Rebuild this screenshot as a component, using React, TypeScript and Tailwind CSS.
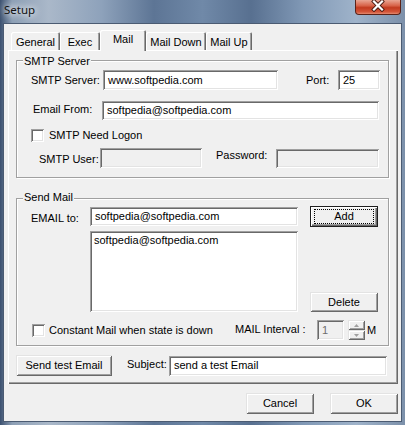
import React from "react";

const sunken =
  "shadow-[inset_1px_1px_0_#a0a0a0,inset_-1px_-1px_0_#ffffff,inset_2px_2px_0_#696969,inset_-2px_-2px_0_#e3e3e3]";
const raised =
  "shadow-[inset_1px_1px_0_#e3e3e3,inset_-1px_-1px_0_#696969,inset_2px_2px_0_#ffffff,inset_-2px_-2px_0_#a0a0a0]";

function Field({
  w,
  h = "h-[20px]",
  value = "",
  disabled = false,
}: {
  w: string;
  h?: string;
  value?: string;
  disabled?: boolean;
}) {
  return (
    <div
      className={`${w} ${h} ${disabled ? "bg-[#f0f0f0] text-[#6d6d6d]" : "bg-white text-black"} ${sunken} flex items-center pl-[5px] shrink-0 whitespace-nowrap overflow-hidden`}
    >
      {value}
    </div>
  );
}

function Check() {
  return <div className={`w-[13px] h-[13px] bg-white shrink-0 ${sunken}`} />;
}

function Btn({ w, h = "h-[21px]", label }: { w: string; h?: string; label: string }) {
  return (
    <div className={`${w} ${h} bg-[#f0f0f0] ${raised} flex items-center justify-center shrink-0`}>
      {label}
    </div>
  );
}

function Group({
  title,
  h,
  titleTop,
  children,
}: {
  title: string;
  h: string;
  titleTop: string;
  children: React.ReactNode;
}) {
  return (
    <div
      className={`relative ml-[8px] w-[373px] ${h} border border-[#a0a0a0] shadow-[inset_1px_1px_0_#ffffff,1px_1px_0_#ffffff]`}
    >
      <div className={`absolute ${titleTop} left-[6px] px-[1px] bg-[#f0f0f0] leading-[13px]`}>{title}</div>
      {children}
    </div>
  );
}

function Tab({ label, w, selected = false }: { label: string; w: string; selected?: boolean }) {
  if (selected) {
    return (
      <div
        className={`relative z-10 ${w} h-[21px] mb-[-1px] bg-[#f0f0f0] rounded-t-[2px] shadow-[inset_1px_1px_0_#ffffff,inset_-1px_0_0_#696969,inset_-2px_0_0_#a0a0a0] flex justify-center pt-[3px] leading-[13px] shrink-0`}
      >
        {label}
      </div>
    );
  }
  return (
    <div
      className={`${w} h-[18px] bg-[#f0f0f0] rounded-t-[2px] shadow-[inset_1px_1px_0_#ffffff,inset_-1px_0_0_#696969,inset_-2px_0_0_#a0a0a0] flex justify-center pt-[4px] leading-[13px] shrink-0`}
    >
      {label}
    </div>
  );
}

export default function App() {
  return (
    <div className="w-[405px] h-[425px] overflow-hidden flex flex-col bg-[linear-gradient(90deg,#3c5170_0%,#8d9fb5_3%,#aab8c9_12%,#8ea2bb_25%,#5d7595_38%,#7089a8_50%,#587090_62%,#8199b6_75%,#9fb3ca_88%,#7c90aa_100%)] font-[family-name:'Liberation_Sans',Arial,sans-serif] text-[11px] text-black">
      {/* Title bar */}
      <div className="h-[23px] flex items-start justify-between shrink-0">
        <div className="pl-[4px] pt-[2px] text-[11.5px] leading-[15px] text-[#111] font-[family-name:'Noto_Sans',sans-serif] [text-shadow:0_0_6px_#ffffff,0_0_10px_#ffffff]">
          Setup
        </div>
        <div className="mr-[4px] w-[46px] h-[15px] rounded-b-[4px] border border-t-0 border-[#5b2218] bg-[linear-gradient(180deg,#e9a593_0%,#d8644a_40%,#c23a1f_55%,#d4563a_85%,#e48a70_100%)] flex items-start justify-center">
          <svg width="14" height="12" viewBox="0 0 14 12">
            <path d="M3 1.5 L11 9.5 M11 1.5 L3 9.5" stroke="#4a1a12" strokeWidth="4" strokeLinecap="square" />
            <path d="M3 1.5 L11 9.5 M11 1.5 L3 9.5" stroke="#ffffff" strokeWidth="2.2" strokeLinecap="square" />
          </svg>
        </div>
      </div>

      {/* Client area */}
      <div className="mx-[3px] h-[399px] bg-[#f0f0f0] border border-[#4b5b72] flex flex-col shrink-0">
        {/* tabs */}
        <div className="mt-[6px] ml-[7px] h-[20px] flex items-end">
          <Tab label="General" w="w-[49px]" />
          <Tab label="Exec" w="w-[40px]" />
          <Tab label="Mail" w="w-[46px]" selected />
          <Tab label="Mail Down" w="w-[60px]" />
          <Tab label="Mail Up" w="w-[46px]" />
        </div>

        {/* tab panel */}
        <div className="ml-[4px] w-[390px] h-[334px] bg-[#f0f0f0] shadow-[inset_1px_1px_0_#ffffff,inset_-1px_-1px_0_#696969,inset_-2px_-2px_0_#a0a0a0] flex flex-col pt-[10px] shrink-0">
          <Group title="SMTP Server" h="h-[118px]" titleTop="top-[-6px]">
            <div className="mt-[9px] h-[20px] flex items-center">
              <div className="ml-[14px] w-[72px] shrink-0">SMTP Server:</div>
              <Field w="w-[175px]" value="www.softpedia.com" />
              <div className="ml-[28px] w-[32px] shrink-0">Port:</div>
              <Field w="w-[42px]" value="25" />
            </div>
            <div className="mt-[10px] h-[20px] flex items-center">
              <div className="ml-[16px] w-[69px] shrink-0 mb-[2px]">Email From:</div>
              <Field w="w-[277px]" h="h-[19px]" value="softpedia@softpedia.com" />
            </div>
            <div className="mt-[9px] h-[13px] flex items-center">
              <div className="ml-[14px]">
                <Check />
              </div>
              <div className="ml-[5px]">SMTP Need Logon</div>
            </div>
            <div className="mt-[6px] h-[20px] flex items-center">
              <div className="ml-[22px] w-[61px] shrink-0 mt-[2px]">SMTP User:</div>
              <Field w="w-[102px]" disabled />
              <div className="ml-[14px] w-[60px] shrink-0 mb-[6px]">Password:</div>
              <Field w="w-[103px]" h="h-[19px]" disabled />
            </div>
          </Group>

          <div className="mt-[20px]">
            <Group title="Send Mail" h="h-[148px]" titleTop="top-[-8px]">
              <div className="mt-[7px] flex">
                <div className="ml-[14px] w-[59px] pt-[4px] shrink-0">EMAIL to:</div>
                <div className="w-[208px] flex flex-col shrink-0">
                  <div className="mt-[1px]">
                    <Field w="w-[208px]" h="h-[19px]" value="softpedia@softpedia.com" />
                  </div>
                  <div className={`mt-[5px] w-[208px] h-[81px] bg-white ${sunken} pl-[4px] pt-[3px] leading-[13px]`}>
                    softpedia@softpedia.com
                  </div>
                </div>
                <div className="ml-[12px] w-[68px] h-[106px] flex flex-col justify-between shrink-0">
                  <div className="relative w-[68px] h-[21px] border border-[#1e1e1e] bg-[#f0f0f0] shadow-[inset_1px_1px_0_#ffffff,inset_-1px_-1px_0_#696969,inset_-2px_-2px_0_#a0a0a0] flex items-center justify-center">
                    <div className="absolute left-[3px] right-[3px] top-[2px] bottom-[2px] border border-dotted border-black" />
                    Add
                  </div>
                  <Btn w="w-[68px]" h="h-[20px]" label="Delete" />
                </div>
              </div>
              <div className="mt-[8px] h-[20px] flex items-center">
                <div className="ml-[15px]">
                  <Check />
                </div>
                <div className="ml-[4px] w-[186px] shrink-0">Constant Mail when state is down</div>
                <div className="w-[82px] shrink-0 mb-[2px]">MAIL Interval :</div>
                <Field w="w-[27px]" value="1" disabled />
                <div className="ml-[4px] w-[17px] h-[20px] flex flex-col shrink-0">
                  <div className={`h-[10px] bg-[#f0f0f0] ${raised} flex items-center justify-center`}>
                    <svg width="5" height="3" viewBox="0 0 5 3">
                      <path d="M0 3 L2.5 0 L5 3 Z" fill="#a0a0a0" />
                    </svg>
                  </div>
                  <div className={`h-[10px] bg-[#f0f0f0] ${raised} flex items-center justify-center`}>
                    <svg width="5" height="3" viewBox="0 0 5 3">
                      <path d="M0 0 L2.5 3 L5 0 Z" fill="#a0a0a0" />
                    </svg>
                  </div>
                </div>
                <div className="ml-[2px]">M</div>
              </div>
            </Group>
          </div>

          <div className="mt-[9px] h-[21px] flex items-center">
            <div className="ml-[8px]">
              <Btn w="w-[96px]" label="Send test Email" />
            </div>
            <div className="ml-[15px] w-[42px] shrink-0 mb-[2px]">Subject:</div>
            <Field w="w-[218px]" value="send a test Email" />
          </div>
        </div>

        {/* dialog buttons */}
        <div className="mt-[9px] flex justify-end gap-[16px] mr-[3px]">
          <Btn w="w-[68px]" label="Cancel" />
          <Btn w="w-[68px]" label="OK" />
        </div>
      </div>
    </div>
  );
}
